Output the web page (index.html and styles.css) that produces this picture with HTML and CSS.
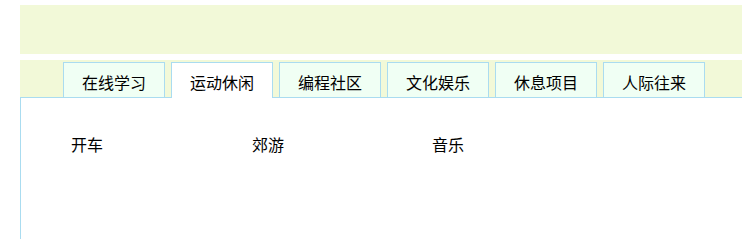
FILE: index.html
```html
<!DOCTYPE html>
<html lang="zh-CN">
<head>
<meta charset="utf-8">
<title>标签页</title>
<link rel="stylesheet" href="styles.css">
</head>
<body>
<div class="page">
  <div class="banner"></div>
  <div class="tabbar">
    <div class="tab">在线学习</div>
    <div class="tab active">运动休闲</div>
    <div class="tab">编程社区</div>
    <div class="tab">文化娱乐</div>
    <div class="tab">休息项目</div>
    <div class="tab">人际往来</div>
  </div>
  <div class="panel">
    <ul class="items">
      <li>开车</li>
      <li>郊游</li>
      <li>音乐</li>
    </ul>
  </div>
</div>
</body>
</html>
```
FILE: styles.css
```css
html, body {
  margin: 0;
  padding: 0;
  background: #ffffff;
  overflow: hidden;
}
body {
  font-family: "Noto Sans CJK SC", "DejaVu Sans", sans-serif;
  font-size: 16px;
  color: #000000;
}
.page {
  padding: 5px 0 0 20px;
}
.banner {
  height: 49px;
  background: #f2f9d8;
}
.tabbar {
  margin-top: 6px;
  height: 37px;
  background: #f2f9d8;
  display: flex;
  align-items: flex-end;
  gap: 6px;
  padding-left: 43px;
}
.tab {
  width: 100px;
  height: 23px;
  padding-top: 11px;
  line-height: 16px;
  text-align: center;
  background: #f0fff4;
  border: 1px solid #aadcf0;
  border-bottom: none;
}
.tab.active {
  background: #ffffff;
  height: 24px;
  margin-bottom: -1px;
  position: relative;
  z-index: 1;
}
.panel {
  border-top: 1px solid #aadcf0;
  border-left: 1px solid #aadcf0;
  height: 141px;
}
.items {
  list-style: none;
  margin: 0;
  padding: 38px 0 0 50px;
  display: grid;
  grid-template-columns: 181px 180px 180px;
  line-height: 16px;
}
```
